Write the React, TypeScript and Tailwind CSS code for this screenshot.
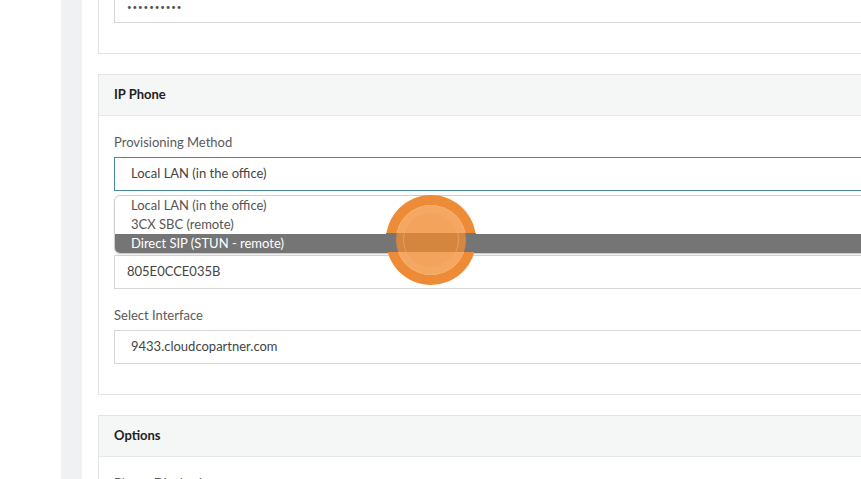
import React from "react";

const font = { fontFamily: "Lato, 'Open Sans', sans-serif" };

function Panel({ title, children, className = "" }: { title?: string; children: React.ReactNode; className?: string }) {
  return (
    <div className={"border border-[#e2e3e4] bg-white " + className}>
      {title && (
        <div className="h-[41px] flex items-center px-[15px] bg-[#f5f6f6] border-b border-[#e6e7e8] text-[13px] font-bold text-[#222]">
          {title}
        </div>
      )}
      {children}
    </div>
  );
}

export default function App() {
  return (
    <div className="w-[861px] h-[479px] overflow-hidden bg-white flex text-[13px]" style={font}>
      <div className="w-[61px] shrink-0 bg-white" />
      <div className="w-[21px] shrink-0 bg-[#f0f1f2]" />
      <div className="flex-1 pl-[16px] overflow-hidden">
        <div className="w-[900px] -mt-[11px] flex flex-col gap-[20px]">
          <Panel className="border-t-0">
            <div className="px-[15px] pb-[30px]">
              <div className="h-[34px] border border-[#d6d6d6] flex items-center pl-[12px] pt-[2px] text-[#555] text-[8px] tracking-[0.9px]">
                ••••••••••
              </div>
            </div>
          </Panel>

          <Panel title="IP Phone">
            <div className="px-[15px] pt-[16px] pb-[30px] relative">
              <div className="h-[20px] leading-[20px] text-[#5a5a5a]">Provisioning Method</div>
              <div className="mt-[5px] h-[34px] border border-[#4a8aa0] flex items-center px-[16px] text-[#444]">
                Local LAN (in the office)
              </div>
              <div className="mt-[39px] h-[20px]" />
              <div className="mt-[5px] h-[34px] border border-[#d6d6d6] flex items-center px-[12px] text-[#444]">
                805E0CCE035B
              </div>
              <div className="mt-[16px] h-[20px] leading-[20px] text-[#5a5a5a]">Select Interface</div>
              <div className="mt-[5px] h-[34px] border border-[#d6d6d6] flex items-center px-[16px] text-[#444]">
                9433.cloudcopartner.com
              </div>

              <div className="absolute left-[15px] right-0 top-[79px] bg-white border border-[#cfcfcf] rounded-[6px] overflow-hidden text-[#555] shadow-[0_1px_2px_rgba(0,0,0,0.08)]">
                <div className="h-[19px] leading-[19px] pl-[16px]">Local LAN (in the office)</div>
                <div className="h-[19px] leading-[19px] pl-[16px]">3CX SBC (remote)</div>
                <div className="h-[19px] leading-[19px] pl-[16px] bg-[#757575] text-white">Direct SIP (STUN - remote)</div>
              </div>
            </div>
          </Panel>

          <Panel title="Options">
            <div className="px-[15px] pt-[16px] pb-[30px]">
              <div className="h-[20px] leading-[20px] text-[#5a5a5a]">Phone Display Language</div>
            </div>
          </Panel>
        </div>
      </div>

      <svg className="absolute left-[386px] top-[195px]" width="90" height="90" viewBox="0 0 90 90">
        <circle cx="45" cy="45" r="45" fill="#ee8b36" />
        <circle cx="45" cy="45" r="35" fill="#ffffff" />
        <rect x="0" y="38" width="90" height="19" fill="#757575" />
        <circle cx="45" cy="45" r="35" fill="rgba(240,140,48,0.76)" />
        <circle cx="45" cy="45" r="27.5" fill="rgba(238,130,40,0.1)" stroke="rgba(248,170,110,0.6)" strokeWidth="1" />
      </svg>
    </div>
  );
}
